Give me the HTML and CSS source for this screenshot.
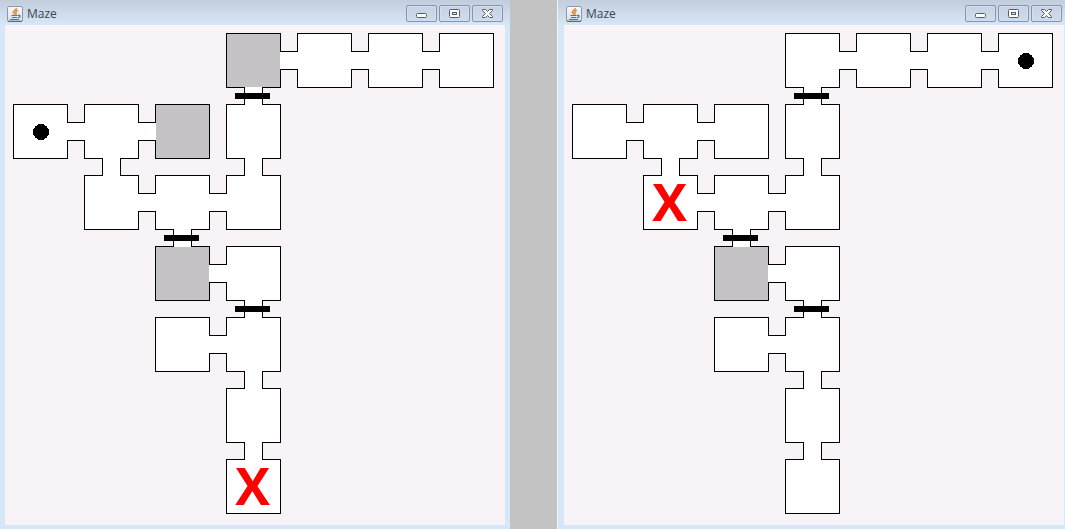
FILE: index.html
```
<!DOCTYPE html>
<html lang="en">
<head>
<meta charset="utf-8">
<title>Maze</title>
<link rel="stylesheet" href="styles.css">
</head>
<body>
<svg width="0" height="0" class="defs" aria-hidden="true">
  <defs>
    <linearGradient id="tile" x1="0" y1="0" x2="0" y2="1"><stop offset="0" stop-color="#f8fafc"/><stop offset="1" stop-color="#d5dee6"/></linearGradient>
    <symbol id="java" viewBox="0 0 16 16">
      <rect x=".5" y=".5" width="15" height="15" rx="1.5" fill="url(#tile)" stroke="#8b99a8"/>
      <path d="M1 15.3H15" stroke="#4d5c6b"/>
      <path d="M9.3 2C9.8 4 6 4.6 6.3 6.3C6.5 7 7.6 7.6 7.5 8.6M10.8 4.2C8.7 5.2 8.3 6 9 7C9.3 7.6 9 8.2 8.5 8.6" fill="none" stroke="#e8842c" stroke-width="1.5"/>
      <path d="M4.5 9.5H10.5M5 11.5H10.2M3 13.5H12M11 9.4C14 8.8 13.6 11.6 11 11.7" fill="none" stroke="#4f7390" stroke-width="1.2"/>
    </symbol>
    <symbol id="min" viewBox="0 0 31 17"><rect x="10.5" y="8.5" width="10" height="4" rx="1" fill="#fff" stroke="#555b6b"/></symbol>
    <symbol id="max" viewBox="0 0 31 17"><rect x="10.5" y="4.5" width="10" height="8" rx="1" fill="#fff" stroke="#555b6b"/><rect x="13.5" y="7.5" width="4" height="2" fill="#dce6f2" stroke="#555b6b"/></symbol>
    <symbol id="close" viewBox="0 0 31 17"><path d="M10.5 4.5H13.5L15.5 6.5L17.5 4.5H20.5V5.5L17.5 8.5L20.5 11.5V12.5H17.5L15.5 10.5L13.5 12.5H10.5V11.5L13.5 8.5L10.5 5.5Z" fill="#fff" stroke="#555b6b"/></symbol>
  </defs>
</svg>
<main class="desktop">
  <section class="window">
    <header class="titlebar">
      <svg class="app-icon" aria-hidden="true"><use href="#java"/></svg>
      <h1 class="title">Maze</h1>
      <button class="control" aria-label="Minimize"><svg><use href="#min"/></svg></button>
      <button class="control" aria-label="Maximize"><svg><use href="#max"/></svg></button>
      <button class="control" aria-label="Close"><svg><use href="#close"/></svg></button>
    </header>
    <div class="maze">
      <div class="room r1 c4 dark"><i class="east"></i><i class="south door"></i></div>
      <div class="room r1 c5"><i class="east"></i></div>
      <div class="room r1 c6"><i class="east"></i></div>
      <div class="room r1 c7"></div>
      <div class="room r2 c1"><i class="east"></i><svg class="player"><circle cx="8" cy="8" r="8"/></svg></div>
      <div class="room r2 c2"><i class="east"></i><i class="south"></i></div>
      <div class="room r2 c3 dark"></div>
      <div class="room r2 c4"><i class="south"></i></div>
      <div class="room r3 c2"><i class="east"></i></div>
      <div class="room r3 c3"><i class="east"></i><i class="south door"></i></div>
      <div class="room r3 c4"></div>
      <div class="room r4 c3 dark"><i class="east"></i></div>
      <div class="room r4 c4"><i class="south door"></i></div>
      <div class="room r5 c3"><i class="east"></i></div>
      <div class="room r5 c4"><i class="south"></i></div>
      <div class="room r6 c4"><i class="south"></i></div>
      <div class="room r7 c4"><span class="goal">X</span></div>
    </div>
  </section>
  <section class="window clipped">
    <header class="titlebar">
      <svg class="app-icon" aria-hidden="true"><use href="#java"/></svg>
      <h1 class="title">Maze</h1>
      <button class="control" aria-label="Minimize"><svg><use href="#min"/></svg></button>
      <button class="control" aria-label="Maximize"><svg><use href="#max"/></svg></button>
      <button class="control" aria-label="Close"><svg><use href="#close"/></svg></button>
    </header>
    <div class="maze">
      <div class="room r1 c4"><i class="east"></i><i class="south door"></i></div>
      <div class="room r1 c5"><i class="east"></i></div>
      <div class="room r1 c6"><i class="east"></i></div>
      <div class="room r1 c7"><svg class="player"><circle cx="8" cy="8" r="8"/></svg></div>
      <div class="room r2 c1"><i class="east"></i></div>
      <div class="room r2 c2"><i class="east"></i><i class="south"></i></div>
      <div class="room r2 c3"></div>
      <div class="room r2 c4"><i class="south"></i></div>
      <div class="room r3 c2"><i class="east"></i><span class="goal">X</span></div>
      <div class="room r3 c3"><i class="east"></i><i class="south door"></i></div>
      <div class="room r3 c4"></div>
      <div class="room r4 c3 dark"><i class="east"></i></div>
      <div class="room r4 c4"><i class="south door"></i></div>
      <div class="room r5 c3"><i class="east"></i></div>
      <div class="room r5 c4"><i class="south"></i></div>
      <div class="room r6 c4"><i class="south"></i></div>
      <div class="room r7 c4"></div>
    </div>
  </section>
</main>
</body>
</html>
```
FILE: styles.css
```
* { box-sizing: border-box; }
body { margin: 0; background: #c3c3c3; font-family: "Open Sans", "Noto Sans", sans-serif; }
.defs { position: absolute; }
.desktop { display: grid; grid-template-columns: 510fr 508fr; gap: 47px; min-height: 100vh; }
.window {
  display: flex;
  flex-direction: column;
  padding: 0 5px 4px;
  background: linear-gradient(#c3cddc, #d6e7f7 25px);
}
.clipped { padding: 0 1px 4px 6px; border-left: 1px solid #f3f5f8; }

.titlebar { display: flex; align-items: center; gap: 2px; height: 25px; padding: 2px 2px 0; }
.app-icon { width: 16px; height: 16px; }
.title { flex: 1; margin: 0 0 0 2px; font-size: 12px; line-height: 16px; font-weight: 400; color: #3f4450; }
.control {
  width: 31px;
  height: 17px;
  padding: 0;
  border: 1px solid #8492b3;
  border-radius: 2px;
  background: linear-gradient(#c8d3e2, #cfdceb);
  box-shadow: inset 0 0 0 1px #d5dfeb;
}
.control svg { display: block; width: 31px; height: 17px; margin: -1px; }

.maze {
  flex: 1;
  display: grid;
  grid-template-columns: repeat(7, 55px);
  grid-template-rows: repeat(7, 55px);
  gap: 16px;
  padding: 8px;
  background: #f7f3f7;
}
.room {
  position: relative;
  display: flex;
  align-items: center;
  justify-content: center;
  border: 1px solid #000;
  background: #fff;
}
.dark { background: #c6c3c6; }
.r1 { grid-row: 1; } .r2 { grid-row: 2; } .r3 { grid-row: 3; } .r4 { grid-row: 4; }
.r5 { grid-row: 5; } .r6 { grid-row: 6; } .r7 { grid-row: 7; }
.c1 { grid-column: 1; } .c2 { grid-column: 2; } .c3 { grid-column: 3; } .c4 { grid-column: 4; }
.c5 { grid-column: 5; } .c6 { grid-column: 6; } .c7 { grid-column: 7; }

/* Passages cover the facing walls of two neighbouring rooms */
.east, .south { position: absolute; z-index: 1; background: #fff; border: 0 solid #000; }
.east { left: 53px; top: 17px; width: 18px; height: 19px; border-width: 1px 0; }
.south { left: 17px; top: 53px; width: 19px; height: 18px; border-width: 0 1px; }
.door::after {
  content: "";
  position: absolute;
  left: -10px;
  top: 6px;
  width: 35px;
  height: 6px;
  background: #000;
}
.player { width: 16px; height: 16px; shape-rendering: crispEdges; }
.goal { padding: 0 2px 4px 0; color: #f00; font-size: 52px; line-height: 52px; font-weight: 700; }
```
